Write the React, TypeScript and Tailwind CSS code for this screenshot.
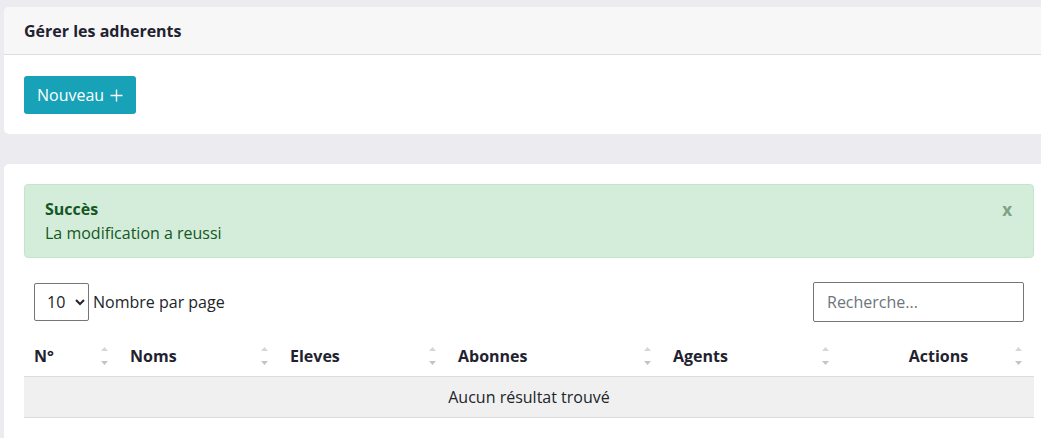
import React from "react";

const SortIcon = () => (
  <span className="flex flex-col items-center gap-[10px]">
    <svg width="7" height="4" viewBox="0 0 7 4"><path d="M0 4 L3.5 0 L7 4 Z" fill="#d6d6d6" /></svg>
    <svg width="7" height="4" viewBox="0 0 7 4"><path d="M0 0 L3.5 4 L7 0 Z" fill="#c4c4c4" /></svg>
  </span>
);

const cols = [
  { label: "N°", w: "w-[96px] pl-[10px]", center: false },
  { label: "Noms", w: "w-[160px] pl-[10px]", center: false },
  { label: "Eleves", w: "w-[168px] pl-[10px]", center: false },
  { label: "Abonnes", w: "w-[215px] pl-[10px]", center: false },
  { label: "Agents", w: "w-[178px] pl-[10px]", center: false },
  { label: "Actions", w: "flex-1 pl-[21px]", center: true },
];

export default function App() {
  return (
    <div
      className="flex min-h-[438px] flex-col bg-[#ebebf0] pt-[7px] pl-[4px] text-[#212529]"
      style={{ fontFamily: '"Open Sans", sans-serif' }}
    >
      <div className="rounded-l-[5px] bg-white">
        <div className="flex h-[48px] items-center rounded-tl-[5px] border-b border-[#dcdcdc] bg-[#f7f7f7] px-[20px]">
          <h1 className="text-[16px] font-bold text-[#1f2330]">Gérer les adherents</h1>
        </div>
        <div className="px-[20px] pb-[20px] pt-[21px]">
          <button className="flex h-[38px] items-center gap-[6px] rounded-[3px] bg-[#17a2b8] px-[13px] text-[16px] text-white">
            <span>Nouveau</span>
            <svg width="13" height="13" viewBox="0 0 13 13" className="mt-[1px]">
              <path d="M6.5 0.5 V12.5 M0.5 6.5 H12.5" stroke="white" strokeWidth="1.4" />
            </svg>
          </button>
        </div>
      </div>

      <div className="mt-[30px] flex-1 rounded-tl-[5px] bg-white pl-[20px] pr-[7px] pt-[20px]">
        <div className="relative h-[74px] rounded-[4px] border border-[#c3e6cb] bg-[#d4edda] px-[20px] pt-[13px] text-[#155724]">
          <div className="text-[16px] font-bold leading-[22px]">Succès</div>
          <div className="text-[16px] leading-[26px]">La modification a reussi</div>
          <span className="absolute right-[21px] top-[12px] text-[17px] font-bold text-[#7fa287]">x</span>
        </div>

        <div className="mt-[24px] flex items-center justify-between px-[10px]">
          <div className="flex items-center gap-[4px]">
            <select className="h-[38px] w-[55px] rounded-[2px] border border-[#767676] bg-white pl-[8px] text-[16px] text-[#212529]">
              <option>10</option>
            </select>
            <span className="text-[16px] text-[#212529]">Nombre par page</span>
          </div>
          <input
            placeholder="Recherche..."
            className="h-[40px] w-[211px] rounded-[2px] border border-[#767676] px-[13px] text-[16px] placeholder:text-[#6c757d]"
          />
        </div>

        <div className="mt-[18px]">
          <div className="flex h-[37px] items-center border-b border-[#dcdcdc] pb-[4px]">
            {cols.map((c) => (
              <div key={c.label} className={`${c.w} flex h-full items-center pr-[12px]`}>
                <span className={`text-[16px] font-bold text-[#1f2330] ${c.center ? "flex-1 text-center" : "flex-1"}`}>
                  {c.label}
                </span>
                <SortIcon />
              </div>
            ))}
          </div>
          <div className="flex h-[41px] items-center justify-center border-b border-[#dcdcdc] bg-[#f0f0f0] text-[16px] text-[#212529]">
            Aucun résultat trouvé
          </div>
        </div>
      </div>
    </div>
  );
}
